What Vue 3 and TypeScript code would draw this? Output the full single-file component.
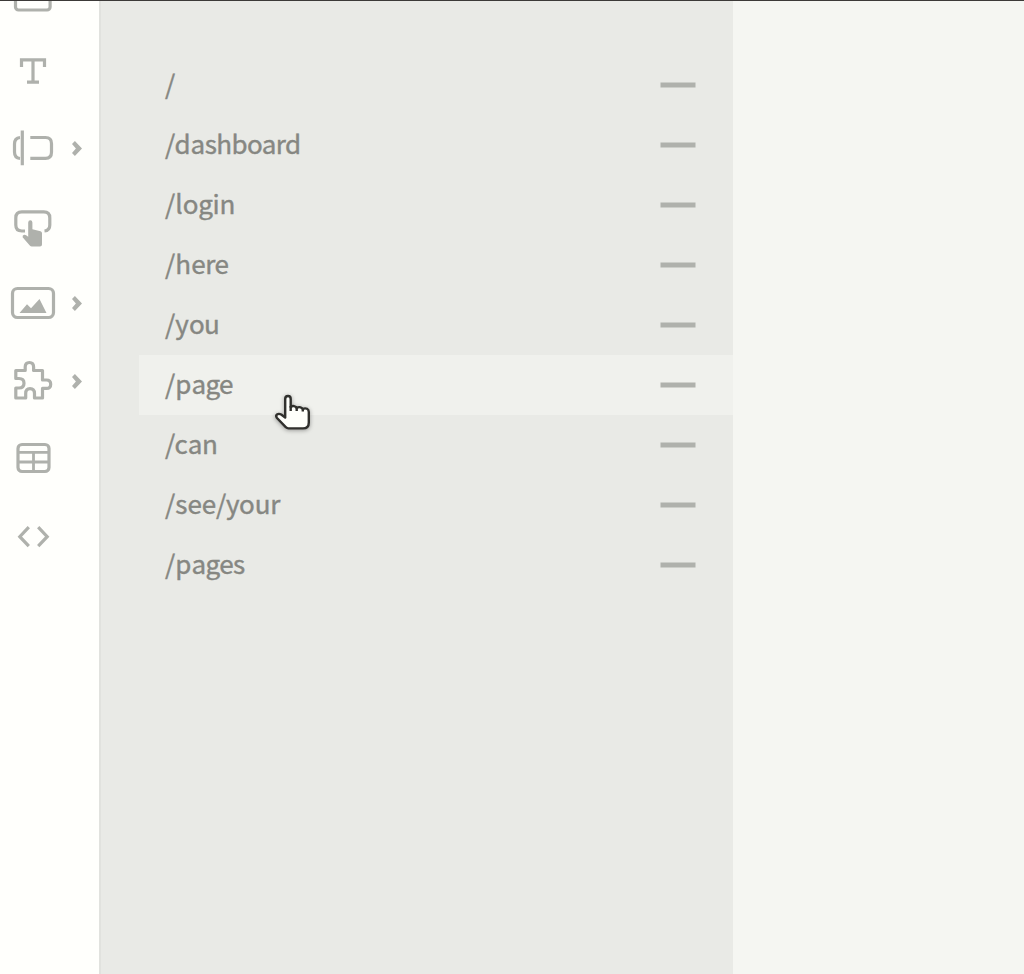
<script setup lang="ts">
interface Tool {
  name: string
  top: number
  height: number
  arrow?: number
}

interface Page {
  path: string
  tracking: number
}

const tools: Tool[] = [
  { name: 'box', top: 1, height: 31 },
  { name: 'text', top: 32, height: 78 },
  { name: 'input', top: 110, height: 78, arrow: 148.5 },
  { name: 'button', top: 188, height: 77 },
  { name: 'image', top: 265, height: 78, arrow: 303.5 },
  { name: 'component', top: 343, height: 77, arrow: 381.5 },
  { name: 'table', top: 420, height: 78 },
  { name: 'code', top: 498, height: 78 },
]

const pages: Page[] = [
  { path: '/', tracking: 0 },
  { path: '/dashboard', tracking: -0.58 },
  { path: '/login', tracking: -0.3 },
  { path: '/here', tracking: -0.4 },
  { path: '/you', tracking: -0.8 },
  { path: '/page', tracking: -0.75 },
  { path: '/can', tracking: -0.5 },
  { path: '/see/your', tracking: -0.22 },
  { path: '/pages', tracking: -0.65 },
]
const hovered = '/page'
</script>

<template>
  <div class="editor">
    <nav class="toolbar">
      <svg
        v-for="tool in tools"
        :key="tool.name"
        class="tool"
        width="99"
        :height="tool.height"
        :viewBox="`0 ${tool.top} 99 ${tool.height}`"
      >
        <rect v-if="tool.name === 'box'" x="15.5" y="-22" width="34.6" height="32" rx="3" />
        <path v-else-if="tool.name === 'text'" d="M21.5 67V59.8H44.5V67M33 59.8V82M27 82.2H39" />
        <template v-else-if="tool.name === 'input'">
          <path d="M20 137.5Q14.5 138 14.5 144V152Q14.5 158 20 158.5" />
          <path d="M22.3 130.5V165.2M30.3 137.5H45.5Q51.5 137.5 51.5 143.5V152.3Q51.5 158.3 45.5 158.3H30.3" />
        </template>
        <template v-else-if="tool.name === 'button'">
          <path d="M25 231H21.8Q15.8 231 15.8 225V217.9Q15.8 211.9 21.8 211.9H43.8Q49.8 211.9 49.8 217.9V225Q49.8 230.5 44.5 231" />
          <path
            class="solid"
            d="M28.2 222.5Q28.4 220.2 30.3 220.2Q32.3 220.2 32.4 222.5V229.3L40.5 231.2Q42 231.7 42 233.3V244.5Q42 246.5 40 246.5H31.8Q30.6 246.5 29.8 245.5L22.6 237.2Q22.3 235.2 24.2 234.8Q25.7 234.6 28.2 236.8Z"
          />
        </template>
        <template v-else-if="tool.name === 'image'">
          <rect x="12.5" y="288.5" width="41" height="29" rx="5" />
          <path class="solid" d="M19.5 313L27 304.3L31 308.3L39.5 299L46.5 313Z" />
        </template>
        <path
          v-else-if="tool.name === 'component'"
          stroke-linejoin="round"
          d="M15.8 370.5H25.2V367Q25.2 362.5 29.4 362.5Q33.6 362.5 33.6 367V370.5H42.5V380H46.5Q50.7 380 50.7 384.2Q50.7 388.4 46.5 388.4H42.5V398H34.5V393.5Q34.5 388.6 30 388.6Q25.7 388.6 25.7 393.5V398H15.8V388H19Q24 388 24 383.3Q24 378.5 19 378.5H15.8Z"
        />
        <g v-else-if="tool.name === 'table'">
          <rect x="18" y="444.5" width="31" height="27" rx="4" />
          <path class="grid" d="M18 452.3H49M18 462H49M33.5 452.3V471.5" />
        </g>
        <path v-else d="M28.8 527.2L19.8 536.7L28.8 546.2M38.2 527.2L47.2 536.7L38.2 546.2" />
        <path
          v-if="tool.arrow"
          class="solid"
          :transform="`translate(72 ${tool.arrow})`"
          d="M0 -4.4L2.9 -7.4L10 0L2.9 7.4L0 4.4L3.9 0Z"
        />
      </svg>
    </nav>
    <main class="pages">
      <ul>
        <li v-for="page in pages" :key="page.path" :class="{ hovered: page.path === hovered }">
          <span class="path" :style="{ letterSpacing: page.tracking + 'px' }">{{ page.path }}</span>
          <svg class="dash" width="36" height="6"><rect x="0.5" y="0.5" width="35" height="5" /></svg>
        </li>
      </ul>
    </main>
    <svg class="cursor" width="50" height="50" viewBox="268 385 50 50">
      <path
        d="M285.2 413V399Q285.2 396 288 396Q290.7 396 290.7 399V407Q292 405.8 294 406.1Q296.2 406.5 296.6 408Q298.5 406.8 300.5 407.3Q302.3 407.8 302.8 409Q305 407.8 307 408.8Q308.8 409.8 308.8 412V422.5Q308.8 428.4 303 428.4H288.5Q287 428.4 286 427.3L277 418Q275.4 415.9 277 414.5Q278.8 413.2 281.2 414.5L285.2 417.5Z"
      />
      <path class="creases" d="M290.7 406V411M296.7 407.5V411M302.8 408.5V411.5" />
    </svg>
  </div>
</template>

<style scoped>
.editor {
  position: relative;
  box-sizing: border-box;
  display: flex;
  height: 974px;
  overflow: hidden;
  border-top: 1px solid #3c3a38;
  background: #f5f6f2;
}
.toolbar {
  box-sizing: border-box;
  flex: 0 0 101px;
  border-right: 2px solid #e1e2de;
  background: #fffffc;
}
.tool {
  display: block;
  fill: none;
  stroke: #afb1ac;
  stroke-width: 3.2;
}
.tool .grid {
  stroke-width: 2.8;
}
.tool .solid {
  fill: #afb1ac;
  stroke: none;
}
.pages {
  box-sizing: border-box;
  flex: 0 0 632px;
  padding: 54px 0 0 38px;
  background: #e9eae6;
}
ul {
  margin: 0;
  padding: 0;
  list-style: none;
}
li {
  box-sizing: border-box;
  display: flex;
  align-items: center;
  justify-content: space-between;
  height: 60px;
  padding: 0 37px 0 26px;
}
.hovered {
  background: #f0f1ed;
}
.path {
  padding-bottom: 4px;
  color: #868782;
  font: 400 26px/56px "Noto Sans CJK JP", "Noto Sans", sans-serif;
  -webkit-text-stroke: 0.4px #868782;
}
.path::first-letter {
  letter-spacing: 0.1px;
}
.dash {
  display: block;
  fill: #afb1ac;
}
.cursor {
  position: absolute;
  left: 268px;
  top: 384px;
  fill: #fefffb;
  stroke: #30302d;
  stroke-width: 2.4;
  stroke-linejoin: round;
  filter: drop-shadow(0 1px 2px rgb(0 0 0 / 35%));
}
.creases {
  fill: none;
}
</style>

<style>
body {
  margin: 0;
}
</style>
